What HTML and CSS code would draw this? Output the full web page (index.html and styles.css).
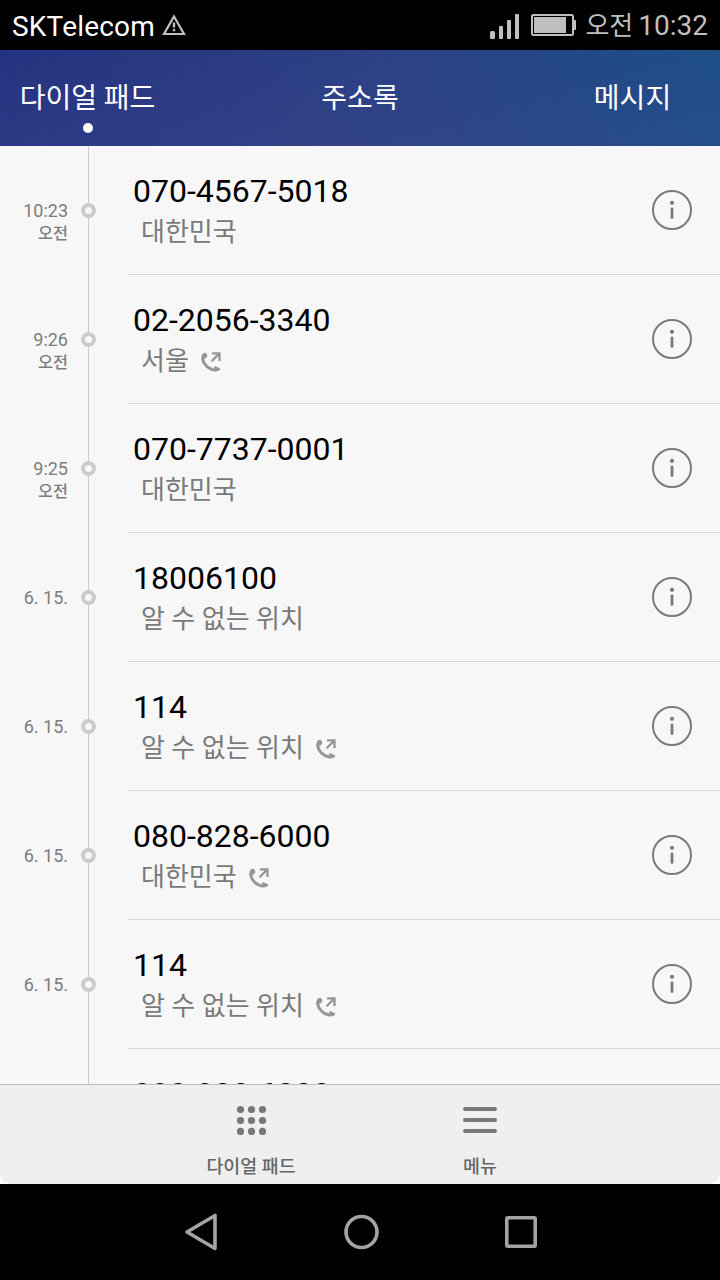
FILE: index.html
```
<!DOCTYPE html>
<html lang="ko">
  <head>
    <meta charset="UTF-8" />
    <meta name="viewport" content="width=device-width, initial-scale=1.0" />
    <link rel="stylesheet" href="styles.css">
    <title>다이얼 패드</title>
  </head>
  <body>
    <svg class="sprite">
      <symbol id="info" viewBox="0 0 40 40">
        <circle cx="20" cy="20" r="19" fill="none" stroke="currentColor" stroke-width="2" />
        <circle cx="20" cy="12.800" r="2.100" fill="currentColor" />
        <path d="M20 19v8.500" fill="none" stroke="currentColor" stroke-width="2.800" stroke-linecap="round" />
      </symbol>
      <symbol id="outgoing" viewBox="0 0 20 20">
        <path d="M3.200 2.500C1.900 3.600 1.500 5 1.700 6.800c.3 2.700 1.700 5.200 3.700 7.200 2.200 2.200 4.800 3.600 7.600 4 2 .2 3.700-.3 4.800-1.600" fill="none" stroke="currentColor" stroke-width="3" />
        <path d="M2.200 1.200C3.600.3 4.900.6 5.500 1.800l.7 1.400c.3.700.2 1.400-.3 1.900L4 7 1 5zM12.800 15.200c.7-.9 1.500-1.100 2.300-.7l3.200 1.400c1 .5 1.200 1.200.7 2L15.500 19.300z" fill="currentColor" />
        <path d="M11 1.300h7.500v7.700M18 1.800l-7.400 7.500" fill="none" stroke="currentColor" stroke-width="2.300" />
      </symbol>
    </svg>

    <header class="status-bar">
      <span class="carrier">SKTelecom</span>
      <svg class="warning" width="24" height="22" viewBox="0 0 24 22">
        <path d="M12 2.500L22 20H2z" fill="none" stroke="currentColor" stroke-width="2.200" />
        <path d="M12 8.500v5M12 15v2.200" fill="none" stroke="currentColor" stroke-width="2.400" />
      </svg>
      <svg class="signal" width="29" height="25" viewBox="0 0 29 25" fill="currentColor">
        <rect x="0" y="17" width="5" height="8" rx="1.500" />
        <rect x="9" y="12" width="4" height="13" rx="1" />
        <rect x="17" y="6" width="4" height="19" rx="1" />
        <rect x="25" y="0" width="4" height="25" rx="1" />
      </svg>
      <svg class="battery" width="45" height="22" viewBox="0 0 45 22">
        <rect x="1" y="1" width="41" height="20" rx="1.500" fill="none" stroke="currentColor" stroke-width="2" />
        <rect x="3" y="3" width="32" height="16" fill="currentColor" />
        <path d="M42 6h2a1 1 0 0 1 1 1v8a1 1 0 0 1-1 1h-2z" fill="currentColor" />
      </svg>
      <span class="meridiem">오전</span>
      <span class="clock">10:32</span>
    </header>

    <nav class="tabs">
      <a class="tab active">다이얼 패드</a>
      <a class="tab">주소록</a>
      <a class="tab">메시지</a>
    </nav>

    <main class="call-log">
      <div class="call">
        <div class="time">10:23<small>오전</small></div>
        <div class="timeline"><i class="dot"></i></div>
        <div class="details">
          <div class="number">070-4567-5018</div>
          <div class="place">대한민국</div>
          <svg class="info"><use href="#info" /></svg>
        </div>
      </div>
      <div class="call">
        <div class="time">9:26<small>오전</small></div>
        <div class="timeline"><i class="dot"></i></div>
        <div class="details">
          <div class="number">02-2056-3340</div>
          <div class="place">서울<svg class="outgoing"><use href="#outgoing" /></svg></div>
          <svg class="info"><use href="#info" /></svg>
        </div>
      </div>
      <div class="call">
        <div class="time">9:25<small>오전</small></div>
        <div class="timeline"><i class="dot"></i></div>
        <div class="details">
          <div class="number">070-7737-0001</div>
          <div class="place">대한민국</div>
          <svg class="info"><use href="#info" /></svg>
        </div>
      </div>
      <div class="call">
        <div class="time">6. 15.</div>
        <div class="timeline"><i class="dot"></i></div>
        <div class="details">
          <div class="number">18006100</div>
          <div class="place">알 수 없는 위치</div>
          <svg class="info"><use href="#info" /></svg>
        </div>
      </div>
      <div class="call">
        <div class="time">6. 15.</div>
        <div class="timeline"><i class="dot"></i></div>
        <div class="details">
          <div class="number">114</div>
          <div class="place">알 수 없는 위치<svg class="outgoing"><use href="#outgoing" /></svg></div>
          <svg class="info"><use href="#info" /></svg>
        </div>
      </div>
      <div class="call">
        <div class="time">6. 15.</div>
        <div class="timeline"><i class="dot"></i></div>
        <div class="details">
          <div class="number">080-828-6000</div>
          <div class="place">대한민국<svg class="outgoing"><use href="#outgoing" /></svg></div>
          <svg class="info"><use href="#info" /></svg>
        </div>
      </div>
      <div class="call">
        <div class="time">6. 15.</div>
        <div class="timeline"><i class="dot"></i></div>
        <div class="details">
          <div class="number">114</div>
          <div class="place">알 수 없는 위치<svg class="outgoing"><use href="#outgoing" /></svg></div>
          <svg class="info"><use href="#info" /></svg>
        </div>
      </div>
      <div class="call">
        <div class="time"></div>
        <div class="timeline"></div>
        <div class="details">
          <div class="number">080-828-6000</div>
        </div>
      </div>
    </main>

    <div class="toolbar-wrap">
      <div class="toolbar">
        <a class="tool">
          <svg width="34" height="30" viewBox="0 0 34 30" fill="currentColor">
            <circle cx="6.500" cy="4.500" r="3.600" /><circle cx="17.500" cy="4.500" r="3.600" /><circle cx="28.500" cy="4.500" r="3.600" />
            <circle cx="6.500" cy="15.500" r="3.600" /><circle cx="17.500" cy="15.500" r="3.600" /><circle cx="28.500" cy="15.500" r="3.600" />
            <circle cx="6.500" cy="26.400" r="3.600" /><circle cx="17.500" cy="26.400" r="3.600" /><circle cx="28.500" cy="26.400" r="3.600" />
          </svg>
          <span>다이얼 패드</span>
        </a>
        <a class="tool">
          <svg width="34" height="30" viewBox="0 0 34 30">
            <path d="M2 4h30M2 15h30M2 26h30" stroke="currentColor" stroke-width="4" stroke-linecap="round" />
          </svg>
          <span>메뉴</span>
        </a>
      </div>
    </div>

    <footer class="nav-bar">
      <svg width="34" height="40" viewBox="0 0 34 40">
        <path d="M31 3.500v33L3 20z" />
      </svg>
      <svg width="36" height="36" viewBox="0 0 36 36">
        <circle cx="17.500" cy="18" r="15.500" />
      </svg>
      <svg width="32" height="32" viewBox="0 0 32 32">
        <rect x="1.800" y="1.800" width="28.400" height="28.400" rx="1" />
      </svg>
    </footer>
  </body>
</html>
```
FILE: styles.css
```
* {
  box-sizing: border-box;
}
body {
  margin: 0;
  width: 720px;
  height: 1280px;
  display: flex;
  flex-direction: column;
  overflow: hidden;
  background-color: #f7f7f7;
  font-family: Roboto, "Noto Sans CJK KR", sans-serif;
}
svg {
  display: block;
  flex-shrink: 0;
}
.sprite {
  display: none;
}

.status-bar {
  display: flex;
  flex: 0 0 50px;
  align-items: center;
  padding: 0 12px;
  background-color: #000;
  color: #bfbfbf;
  font-size: 28px;
  line-height: 40px;
}
.carrier {
  color: #fff;
  padding-top: 3px;
  letter-spacing: 0.2px;
}
.warning {
  margin-left: 7px;
}
.signal {
  margin: 3px 12px 0 auto;
}
.battery {
  margin-right: 9px;
}
.meridiem {
  padding-top: 2px;
  font-size: 26px;
  margin-right: 5px;
}
.clock {
  padding-top: 1px;
}

.tabs {
  display: grid;
  grid-template-columns: 175px 1fr 175px;
  flex: 0 0 96px;
  background: linear-gradient(to top, rgba(70, 75, 150, 0.22), rgba(70, 75, 150, 0)), linear-gradient(100deg, #25327f, #2c4085 50%, #1c4f86);
  color: #fff;
  font-size: 28px;
  line-height: 40px;
  text-align: center;
}
.tab {
  padding-top: 29px;
}
.active::after {
  content: "";
  display: block;
  width: 10px;
  height: 10px;
  margin: 4px 0 0 83px;
  border-radius: 50%;
  background-color: #fff;
}

.call-log {
  flex: 1;
  min-height: 0;
  overflow: hidden;
}
.call {
  display: grid;
  grid-template-columns: 68px 60px 1fr;
  height: 129px;
}
.time {
  padding-top: 54px;
  color: #7c7c7c;
  font-size: 18px;
  line-height: 22px;
  text-align: right;
}
.time small {
  display: block;
  padding-top: 1px;
  font-size: 16.3px;
  font-weight: 500;
}
.timeline {
  display: flex;
  align-items: center;
  padding-left: 13px;
  background: linear-gradient(#cacaca, #cacaca) 20px 0 / 1px 100% no-repeat;
}
.dot {
  width: 15px;
  height: 15px;
  border: 4px solid #cbcbcb;
  border-radius: 50%;
  background-color: #f7f7f7;
}
.details {
  display: grid;
  grid-template-columns: 1fr 40px;
  grid-template-rows: 41px 40px;
  padding: 25px 28px 0 5px;
  border-bottom: 1px solid #d9d9d9;
}
.number {
  color: #000;
  font-size: 32px;
  line-height: 40px;
}
.place {
  display: flex;
  align-items: center;
  grid-column: 1;
  padding-left: 8px;
  color: #7a7a7a;
  font-size: 26px;
  line-height: 40px;
}
.outgoing {
  width: 20px;
  height: 20px;
  margin: 2px 0 0 12.5px;
  color: #969696;
}
.info {
  grid-column: 2;
  grid-row: 1 / 3;
  width: 40px;
  height: 40px;
  margin-top: 19px;
  color: #7a7a7a;
}

.toolbar-wrap {
  flex: 0 0 100px;
  background-color: #fff;
}
.toolbar {
  display: flex;
  justify-content: center;
  height: 100px;
  padding: 20px 0 0 11px;
  border-top: 1px solid #bdbdbd;
  border-radius: 0 0 10px 10px;
  background-color: #efefef;
}
.tool {
  display: flex;
  flex-direction: column;
  align-items: center;
  width: 229px;
  color: #777;
  font-size: 18.4px;
  line-height: 26px;
}
.tool svg {
  margin-bottom: 19px;
}
.tool span {
  color: #666;
  font-weight: 500;
}

.nav-bar {
  display: flex;
  flex: 0 0 96px;
  align-items: center;
  justify-content: space-between;
  padding: 0 183px 0 184px;
  background-color: #000;
}
.nav-bar svg {
  fill: none;
  stroke: #a3a3a3;
  stroke-width: 3.6;
  stroke-linejoin: round;
}
```
